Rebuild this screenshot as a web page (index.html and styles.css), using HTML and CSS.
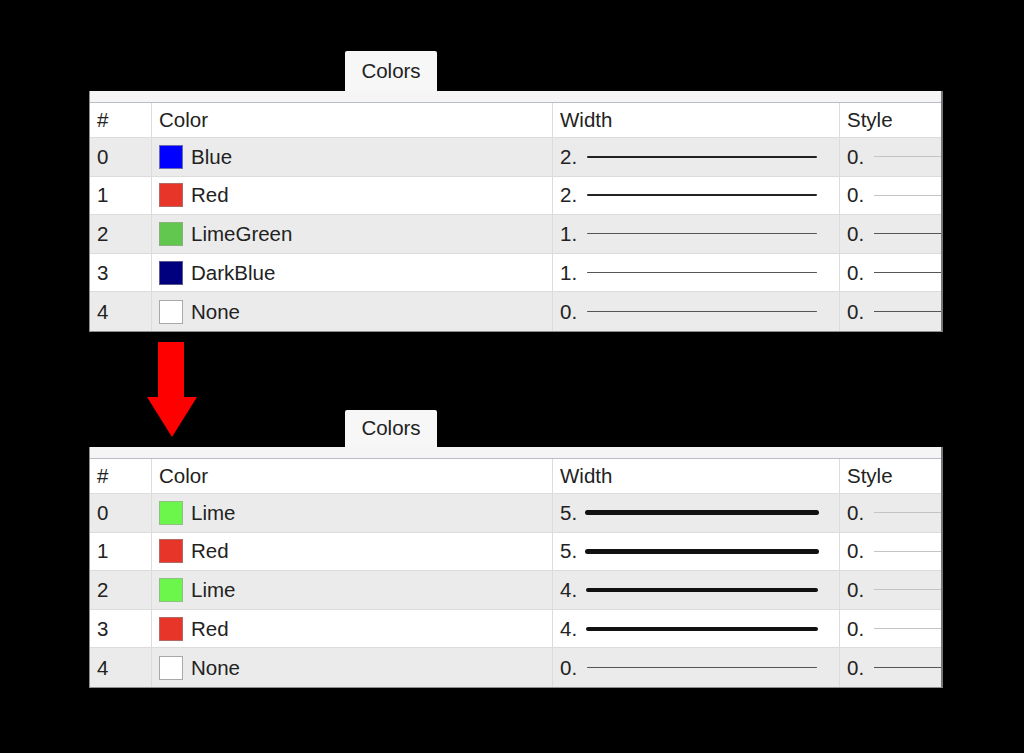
FILE: index.html
```html
<!DOCTYPE html>
<html lang="en">
<head>
    <meta charset="UTF-8">
    <title>Colors</title>
    <link rel="stylesheet" href="styles.css">
</head>
<body>
    <div class="figure">
        <div class="tab-row tab-row-first">
            <div class="tab">Colors</div>
        </div>
        <div class="panel">
            <div class="grid">
                <div class="row head"><div class="cell">#</div><div class="cell">Color</div><div class="cell">Width</div><div class="cell">Style</div></div>
                <div class="row odd">
                    <div class="cell">0</div>
                    <div class="cell"><span class="swatch sw-blue"></span>Blue</div>
                    <div class="cell">2.<span class="wline w2"></span></div>
                    <div class="cell">0.<span class="sline light"></span></div>
                </div>
                <div class="row">
                    <div class="cell">1</div>
                    <div class="cell"><span class="swatch sw-red"></span>Red</div>
                    <div class="cell">2.<span class="wline w2"></span></div>
                    <div class="cell">0.<span class="sline light"></span></div>
                </div>
                <div class="row odd">
                    <div class="cell">2</div>
                    <div class="cell"><span class="swatch sw-limegreen"></span>LimeGreen</div>
                    <div class="cell">1.<span class="wline w1"></span></div>
                    <div class="cell">0.<span class="sline"></span></div>
                </div>
                <div class="row">
                    <div class="cell">3</div>
                    <div class="cell"><span class="swatch sw-darkblue"></span>DarkBlue</div>
                    <div class="cell">1.<span class="wline w1"></span></div>
                    <div class="cell">0.<span class="sline"></span></div>
                </div>
                <div class="row odd">
                    <div class="cell">4</div>
                    <div class="cell"><span class="swatch"></span>None</div>
                    <div class="cell">0.<span class="wline w1"></span></div>
                    <div class="cell">0.<span class="sline"></span></div>
                </div>
            </div>
        </div>

        <div class="tab-row tab-row-second">
            <svg class="arrow" width="52" height="96" viewBox="0 0 52 96">
                <path d="M12 0 H38 V55 H51 L26 95 L1 55 H12 Z" fill="#ff0000"/>
            </svg>
            <div class="tab tab-second">Colors</div>
        </div>
        <div class="panel">
            <div class="grid">
                <div class="row head"><div class="cell">#</div><div class="cell">Color</div><div class="cell">Width</div><div class="cell">Style</div></div>
                <div class="row odd">
                    <div class="cell">0</div>
                    <div class="cell"><span class="swatch sw-lime"></span>Lime</div>
                    <div class="cell">5.<span class="wline w5"></span></div>
                    <div class="cell">0.<span class="sline light"></span></div>
                </div>
                <div class="row">
                    <div class="cell">1</div>
                    <div class="cell"><span class="swatch sw-red"></span>Red</div>
                    <div class="cell">5.<span class="wline w5"></span></div>
                    <div class="cell">0.<span class="sline light"></span></div>
                </div>
                <div class="row odd">
                    <div class="cell">2</div>
                    <div class="cell"><span class="swatch sw-lime"></span>Lime</div>
                    <div class="cell">4.<span class="wline w4"></span></div>
                    <div class="cell">0.<span class="sline light"></span></div>
                </div>
                <div class="row">
                    <div class="cell">3</div>
                    <div class="cell"><span class="swatch sw-red"></span>Red</div>
                    <div class="cell">4.<span class="wline w4"></span></div>
                    <div class="cell">0.<span class="sline light"></span></div>
                </div>
                <div class="row odd">
                    <div class="cell">4</div>
                    <div class="cell"><span class="swatch"></span>None</div>
                    <div class="cell">0.<span class="wline w1"></span></div>
                    <div class="cell">0.<span class="sline"></span></div>
                </div>
            </div>
        </div>
    </div>
</body>
</html>
```

FILE: styles.css
```css
body {
    margin: 0;
    background-color: #000;
    font-family: "Liberation Sans", Arial, sans-serif;
    font-size: 20.5px;
    color: #222;
}
.figure {
    width: 854px;
    padding: 51px 0 0 89px;
}
.tab-row {
    display: flex;
    align-items: flex-end;
}
.tab-row-first {
    height: 40px;
}
.tab-row-second {
    height: 115px;
}
.tab {
    width: 92px;
    height: 40px;
    margin-left: 256px;
    box-sizing: border-box;
    background-color: #f7f7f7;
    border-radius: 2px 2px 0 0;
    display: flex;
    align-items: center;
    justify-content: center;
}
.tab-second {
    height: 37px;
    margin-left: 147px;
}
.arrow {
    align-self: flex-start;
    margin: 10px 0 0 57px;
}
.panel {
    background-color: #f5f5f5;
    padding-top: 11px;
    border-left: 1px solid #8e8e8e;
    border-right: 2px solid #777;
    border-bottom: 1px solid #8e8e8e;
    overflow: hidden;
}
.grid {
    border-top: 1px solid #b9bdc7;
    width: 900px;
}
.row {
    display: grid;
    grid-template-columns: 61px 401px 287px 151px;
    height: 38.6px;
    box-sizing: border-box;
    border-bottom: 1px solid #dcdcdc;
    background-color: #fff;
}
.row:last-child {
    border-bottom: none;
}
.row.head {
    height: 35px;
}
.row.odd {
    background-color: #ebebeb;
}
.cell {
    display: flex;
    align-items: center;
    padding-left: 7px;
    border-left: 1px solid #dcdcdc;
    white-space: nowrap;
    overflow: hidden;
}
.cell:first-child {
    border-left: none;
}
.swatch {
    width: 22px;
    height: 22px;
    border: 1px solid #a9a9a9;
    background-color: #fff;
    margin-right: 8px;
    flex: none;
}
.sw-blue { background-color: #0000ff; border-color: #6b6bb0; }
.sw-red { background-color: #e8352a; border-color: #b06a64; }
.sw-limegreen { background-color: #62c74f; border-color: #8ab080; }
.sw-darkblue { background-color: #00007e; border-color: #5b5b8a; }
.sw-lime { background-color: #6cf64c; border-color: #8fbf84; }
.wline {
    display: block;
    width: 230px;
    margin-left: 10px;
    background-color: #333;
    border-radius: 3px;
}
.w1 { height: 1px; background-color: #555; }
.w2 { height: 2px; background-color: #222; }
.w4 { height: 4px; background-color: #111; width: 232px; margin-left: 9px; }
.w5 { height: 5px; background-color: #111; width: 234px; margin-left: 8px; }
.sline {
    display: block;
    width: 100px;
    height: 1px;
    margin-left: 10px;
    background-color: #555;
}
.sline.light {
    background-color: #c4c4c4;
}
```
